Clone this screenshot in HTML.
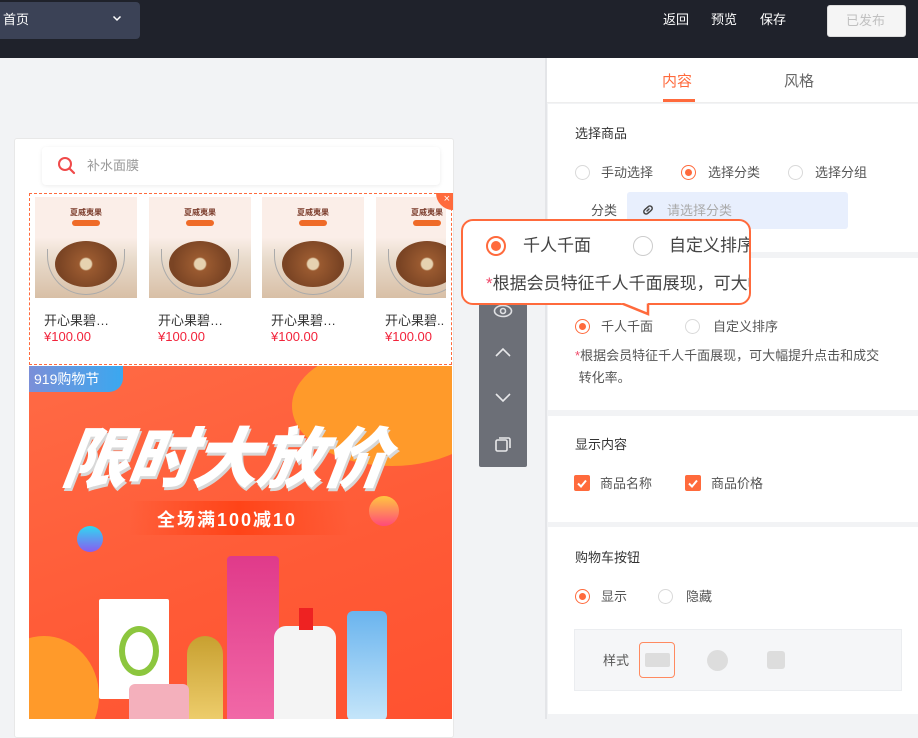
<!DOCTYPE html>
<html><head><meta charset="utf-8"><style>
*{margin:0;padding:0;box-sizing:border-box}
body{width:918px;height:719px;overflow:hidden;position:relative;background:#f2f3f5;font-family:"Liberation Sans","Noto Sans CJK SC",sans-serif;color:#333}
.a{position:absolute}
.top{left:0;top:0;width:918px;height:58px;background:#1f222b}
.t{font-size:13px;white-space:nowrap;line-height:15px}
.rad{position:absolute;width:15px;height:15px;border-radius:50%;border:1px solid #d9d9d9;background:#fff}
.rad.on{border-color:#ff6a3c}
.rad.on:after{content:"";position:absolute;left:3px;top:3px;width:7px;height:7px;border-radius:50%;background:#ff6a3c}
.cb{position:absolute;width:16px;height:16px;border-radius:2px;background:#ff6a3c}
.prod{position:absolute;top:197px;width:102px}
.img{width:102px;height:101px;background:linear-gradient(#fbeee8 0,#fbeee8 40%,#e9dccd 60%,#d8bfa6 100%);position:relative;overflow:hidden}
.img .ttl{position:absolute;top:10px;left:0;width:100%;text-align:center;font-size:8px;color:#7a3b2a;font-weight:bold}
.img .pill{position:absolute;top:23px;left:37px;width:28px;height:6px;border-radius:3px;background:#ef6b28}
.img .bowl{position:absolute;left:12px;top:52px;width:78px;height:46px;border-radius:0 0 39px 39px;background:#fff;border:1px solid #aaa}
.img .nut{position:absolute;left:20px;top:44px;width:62px;height:46px;border-radius:50%;background:radial-gradient(circle at 50% 50%,#e6d2b0 0,#e6d2b0 14%,#9a5a30 18%,#7a4424 70%)}
.nm{font-size:13px;color:#333;margin-top:15px;padding-left:9px;white-space:nowrap;overflow:hidden;line-height:16px}
.pr{font-size:13px;color:#f2233b;padding-left:9px;line-height:16px}
</style></head><body>
<div class="a top"></div>
<div class="a" style="left:0;top:2px;width:140px;height:37px;background:#3b4256;border-radius:0 4px 4px 0"></div>
<div class="a t" style="left:3px;top:12px;color:#fff">首页</div>
<svg class="a" style="left:112px;top:15px" width="10" height="7" viewBox="0 0 10 7"><path d="M1.5 1.5L5 5l3.5-3.5" fill="none" stroke="#fff" stroke-width="1.5"/></svg>
<div class="a t" style="left:663px;top:12px;color:#fff">返回</div>
<div class="a t" style="left:711px;top:12px;color:#fff">预览</div>
<div class="a t" style="left:760px;top:12px;color:#fff">保存</div>
<div class="a" style="left:827px;top:5px;width:79px;height:32px;background:#f5f5f5;border-radius:3px;border:1px solid #ddd"></div>
<div class="a t" style="left:846px;top:13px;color:#c0c0c0">已发布</div>

<!-- phone -->
<div class="a" style="left:14px;top:138px;width:440px;height:600px;background:#fff;border:1px solid #e8e8e8;border-radius:3px"></div>
<div class="a" style="left:42px;top:147px;width:398px;height:38px;background:#fff;border-radius:4px;box-shadow:0 1px 4px rgba(0,0,0,.08)"></div>
<svg class="a" style="left:57px;top:156px" width="20" height="20" viewBox="0 0 20 20"><circle cx="8" cy="8" r="6" fill="none" stroke="#f04a4a" stroke-width="2"/><path d="M12.5 12.5L17 17" stroke="#f04a4a" stroke-width="2.2" stroke-linecap="round"/></svg>
<div class="a t" style="left:87px;top:158px;color:#999">补水面膜</div>
<div class="a" style="left:29px;top:193px;width:423px;height:172px;border:1.5px dashed #ff6a3c"></div>
<div class="prod" style="left:35px"><div class="img"><div class="ttl">夏威夷果</div><div class="pill"></div><div class="nut"></div><div class="bowl" style="background:transparent;border-top:none"></div></div><div class="nm">开心果碧…</div><div class="pr">¥100.00</div></div>
<div class="prod" style="left:149px"><div class="img"><div class="ttl">夏威夷果</div><div class="pill"></div><div class="nut"></div><div class="bowl" style="background:transparent;border-top:none"></div></div><div class="nm">开心果碧…</div><div class="pr">¥100.00</div></div>
<div class="prod" style="left:262px"><div class="img"><div class="ttl">夏威夷果</div><div class="pill"></div><div class="nut"></div><div class="bowl" style="background:transparent;border-top:none"></div></div><div class="nm">开心果碧…</div><div class="pr">¥100.00</div></div>
<div class="prod" style="left:376px;width:70px;overflow:hidden"><div class="img"><div class="ttl">夏威夷果</div><div class="pill"></div><div class="nut"></div><div class="bowl" style="background:transparent;border-top:none"></div></div><div class="nm">开心果碧..</div><div class="pr">¥100.00</div></div>
<div class="a" style="left:436px;top:193px;width:17px;height:17px;background:#ff6a3c;border-radius:0 0 0 17px;color:#fff;font-size:11px;line-height:13px;text-align:right;padding-right:3px">×</div>

<!-- banner -->
<div class="a" style="left:29px;top:366px;width:423px;height:353px;overflow:hidden;background:linear-gradient(160deg,#ff6a45 0,#ff5a36 60%,#ff5230 100%)">
 <div class="a" style="right:-40px;top:-20px;width:200px;height:120px;border-radius:50%;background:#ff9a2a"></div>
 <div class="a" style="left:-40px;top:270px;width:110px;height:120px;border-radius:50%;background:#ff9a2a"></div>
 <div class="a" style="left:0;top:0;width:94px;height:26px;background:linear-gradient(90deg,#7b8fd8,#3aa8f0);border-radius:0 0 14px 0;color:#fff;font-size:14px;line-height:26px;padding-left:5px">919购物节</div>
 <div class="a" style="left:35px;top:40px;font-size:66px;font-weight:900;color:#fff;font-style:italic;letter-spacing:-1px;text-shadow:2px 3px 0 #d8d8d8;transform:skewX(-8deg)">限时大放价</div>
 <div class="a" style="left:100px;top:135px;width:220px;height:34px;background:linear-gradient(90deg,rgba(255,60,20,0),#ff4418,rgba(255,60,20,0))"></div>
 <div class="a" style="left:128px;top:140px;font-size:18px;font-weight:bold;color:#fff;letter-spacing:2px">全场满100减10</div>
 <div class="a" style="left:340px;top:130px;width:30px;height:30px;border-radius:50%;background:linear-gradient(#ffc640,#ff4a7a)"></div>
 <div class="a" style="left:48px;top:160px;width:26px;height:26px;border-radius:50%;background:linear-gradient(#30d8f0,#8a5cf0)"></div>
 <div class="a" style="left:70px;top:233px;width:70px;height:100px;background:#fff;border-radius:2px"></div>
 <div class="a" style="left:90px;top:260px;width:40px;height:50px;border-radius:50%;border:6px solid #8cc63e"></div>
 <div class="a" style="left:198px;top:190px;width:52px;height:170px;background:linear-gradient(#e03a8a,#f26aa8);border-radius:4px"></div>
 <div class="a" style="left:158px;top:270px;width:36px;height:90px;background:linear-gradient(#c8a030,#f0d070);border-radius:18px 18px 4px 4px"></div>
 <div class="a" style="left:245px;top:260px;width:62px;height:100px;background:#f4f4f4;border-radius:12px 12px 0 0"></div>
 <div class="a" style="left:270px;top:242px;width:14px;height:22px;background:#e22"></div>
 <div class="a" style="left:318px;top:245px;width:40px;height:110px;background:linear-gradient(#6ab4ee,#c6e6fa);border-radius:6px"></div>
 <div class="a" style="left:100px;top:318px;width:60px;height:40px;background:#f4b0bc;border-radius:6px"></div>
</div>

<!-- toolbar -->
<div class="a" style="left:479px;top:290px;width:48px;height:177px;background:#6c6f77;border-radius:2px"></div>
<svg class="a" style="left:493px;top:304px" width="20" height="14" viewBox="0 0 20 14"><ellipse cx="10" cy="7" rx="8.5" ry="5.5" fill="none" stroke="#dfe0e3" stroke-width="1.6"/><circle cx="10" cy="7" r="2.5" fill="none" stroke="#dfe0e3" stroke-width="1.6"/></svg>
<svg class="a" style="left:494px;top:346px" width="18" height="12" viewBox="0 0 18 12"><path d="M2 10L9 3l7 7" fill="none" stroke="#e8e8ea" stroke-width="1.6"/></svg>
<svg class="a" style="left:494px;top:392px" width="18" height="12" viewBox="0 0 18 12"><path d="M2 2l7 7 7-7" fill="none" stroke="#e8e8ea" stroke-width="1.6"/></svg>
<svg class="a" style="left:494px;top:435px" width="18" height="18" viewBox="0 0 18 18"><rect x="2" y="5" width="11" height="11" rx="1.5" fill="none" stroke="#e8e8ea" stroke-width="1.6"/><path d="M5 3h9.5a1.5 1.5 0 0 1 1.5 1.5V13" fill="none" stroke="#e8e8ea" stroke-width="1.6"/></svg>

<!-- right panel -->
<div class="a" style="left:545px;top:58px;width:2px;height:661px;background:#e4e5e8"></div>
<div class="a" style="left:547px;top:58px;width:371px;height:661px;background:#f2f3f5"></div>
<div class="a" style="left:547px;top:58px;width:371px;height:45px;background:#fff;border-bottom:1px solid #eee"></div>
<div class="a t" style="left:662px;top:73px;font-size:15px;line-height:17px;color:#ff6a3c">内容</div>
<div class="a" style="left:663px;top:99px;width:32px;height:3px;background:#ff6a3c"></div>
<div class="a t" style="left:784px;top:73px;font-size:15px;line-height:17px;color:#666">风格</div>

<div class="a" style="left:548px;top:104px;width:370px;height:148px;background:#fff"></div>
<div class="a t" style="left:575px;top:126px;color:#333">选择商品</div>
<div class="rad" style="left:575px;top:165px"></div><div class="a t" style="left:601px;top:165px;color:#555">手动选择</div>
<div class="rad on" style="left:681px;top:165px"></div><div class="a t" style="left:708px;top:165px;color:#555">选择分类</div>
<div class="rad" style="left:788px;top:165px"></div><div class="a t" style="left:815px;top:165px;color:#555">选择分组</div>
<div class="a t" style="left:591px;top:203px;color:#555">分类</div>
<div class="a" style="left:627px;top:192px;width:221px;height:37px;background:#e8effd;border-radius:3px"></div>
<svg class="a" style="left:640px;top:202px" width="16" height="16" viewBox="0 0 16 16"><path d="M7 9l2-2M6 6.5L4.5 8a2.3 2.3 0 0 0 3.3 3.3L9.3 10M10 9.5l1.5-1.5a2.3 2.3 0 0 0-3.3-3.3L6.7 6" fill="none" stroke="#444" stroke-width="1.5" stroke-linecap="round"/></svg>
<div class="a t" style="left:667px;top:203px;color:#aaa">请选择分类</div>

<div class="a" style="left:548px;top:258px;width:370px;height:152px;background:#fff"></div>
<div class="rad on" style="left:575px;top:319px"></div><div class="a t" style="left:601px;top:319px;color:#555">千人千面</div>
<div class="rad" style="left:685px;top:319px"></div><div class="a t" style="left:713px;top:319px;color:#555">自定义排序</div>
<div class="a" style="left:575px;top:345px;width:330px;font-size:13px;line-height:22px;color:#555"><span style="color:#f04a6a">*</span>根据会员特征千人千面展现，可大幅提升点击和成交<br>&nbsp;转化率。</div>

<div class="a" style="left:548px;top:416px;width:370px;height:106px;background:#fff"></div>
<div class="a t" style="left:575px;top:437px;color:#333">显示内容</div>
<div class="cb" style="left:574px;top:475px"><svg width="16" height="16" viewBox="0 0 16 16"><path d="M4 8.5l3 3 5-6" fill="none" stroke="#fff" stroke-width="2"/></svg></div><div class="a t" style="left:600px;top:476px;color:#555">商品名称</div>
<div class="cb" style="left:685px;top:475px"><svg width="16" height="16" viewBox="0 0 16 16"><path d="M4 8.5l3 3 5-6" fill="none" stroke="#fff" stroke-width="2"/></svg></div><div class="a t" style="left:711px;top:476px;color:#555">商品价格</div>

<div class="a" style="left:548px;top:527px;width:370px;height:187px;background:#fff"></div>
<div class="a t" style="left:575px;top:550px;color:#333">购物车按钮</div>
<div class="rad on" style="left:575px;top:589px"></div><div class="a t" style="left:601px;top:589px;color:#555">显示</div>
<div class="rad" style="left:658px;top:589px"></div><div class="a t" style="left:686px;top:589px;color:#555">隐藏</div>
<div class="a" style="left:574px;top:629px;width:328px;height:62px;background:#f5f6f8;border:1px solid #ebedf0"></div>
<div class="a t" style="left:603px;top:653px;color:#555">样式</div>
<div class="a" style="left:639px;top:642px;width:36px;height:36px;border:1px solid #ff8a60;border-radius:4px"></div>
<div class="a" style="left:645px;top:653px;width:25px;height:14px;background:#ddd;border-radius:2px"></div>
<div class="a" style="left:707px;top:650px;width:21px;height:21px;background:#ddd;border-radius:50%"></div>
<div class="a" style="left:767px;top:651px;width:18px;height:18px;background:#ddd;border-radius:3px"></div>

<!-- tooltip -->
<div class="a" style="left:461px;top:219px;width:290px;height:86px;background:#fff;border:2.5px solid #ff6a3c;border-radius:12px;overflow:hidden">
 <div class="a" style="left:23px;top:15px;width:20px;height:20px;border-radius:50%;border:2px solid #ff6a3c"></div>
 <div class="a" style="left:28px;top:20px;width:10px;height:10px;border-radius:50%;background:#ff6a3c"></div>
 <div class="a t" style="left:60px;top:15px;font-size:17px;line-height:20px;color:#444">千人千面</div>
 <div class="a" style="left:170px;top:15px;width:20px;height:20px;border-radius:50%;border:1.5px solid #ccc"></div>
 <div class="a t" style="left:206px;top:15px;font-size:17px;line-height:20px;color:#444">自定义排序</div>
 <div class="a t" style="left:23px;top:53px;font-size:17px;line-height:20px;color:#444"><span style="color:#f04a6a">*</span>根据会员特征千人千面展现，可大幅</div>
</div>
<svg class="a" style="left:620px;top:301px" width="32" height="15" viewBox="0 0 32 15"><path d="M0 1.5L28 1.5L28 13Z" fill="#fff"/><path d="M2 2.5L28 13L28 2.5" fill="none" stroke="#ff6a3c" stroke-width="2.5"/><rect x="0" y="0" width="26" height="2" fill="#fff"/></svg>
</body></html>
